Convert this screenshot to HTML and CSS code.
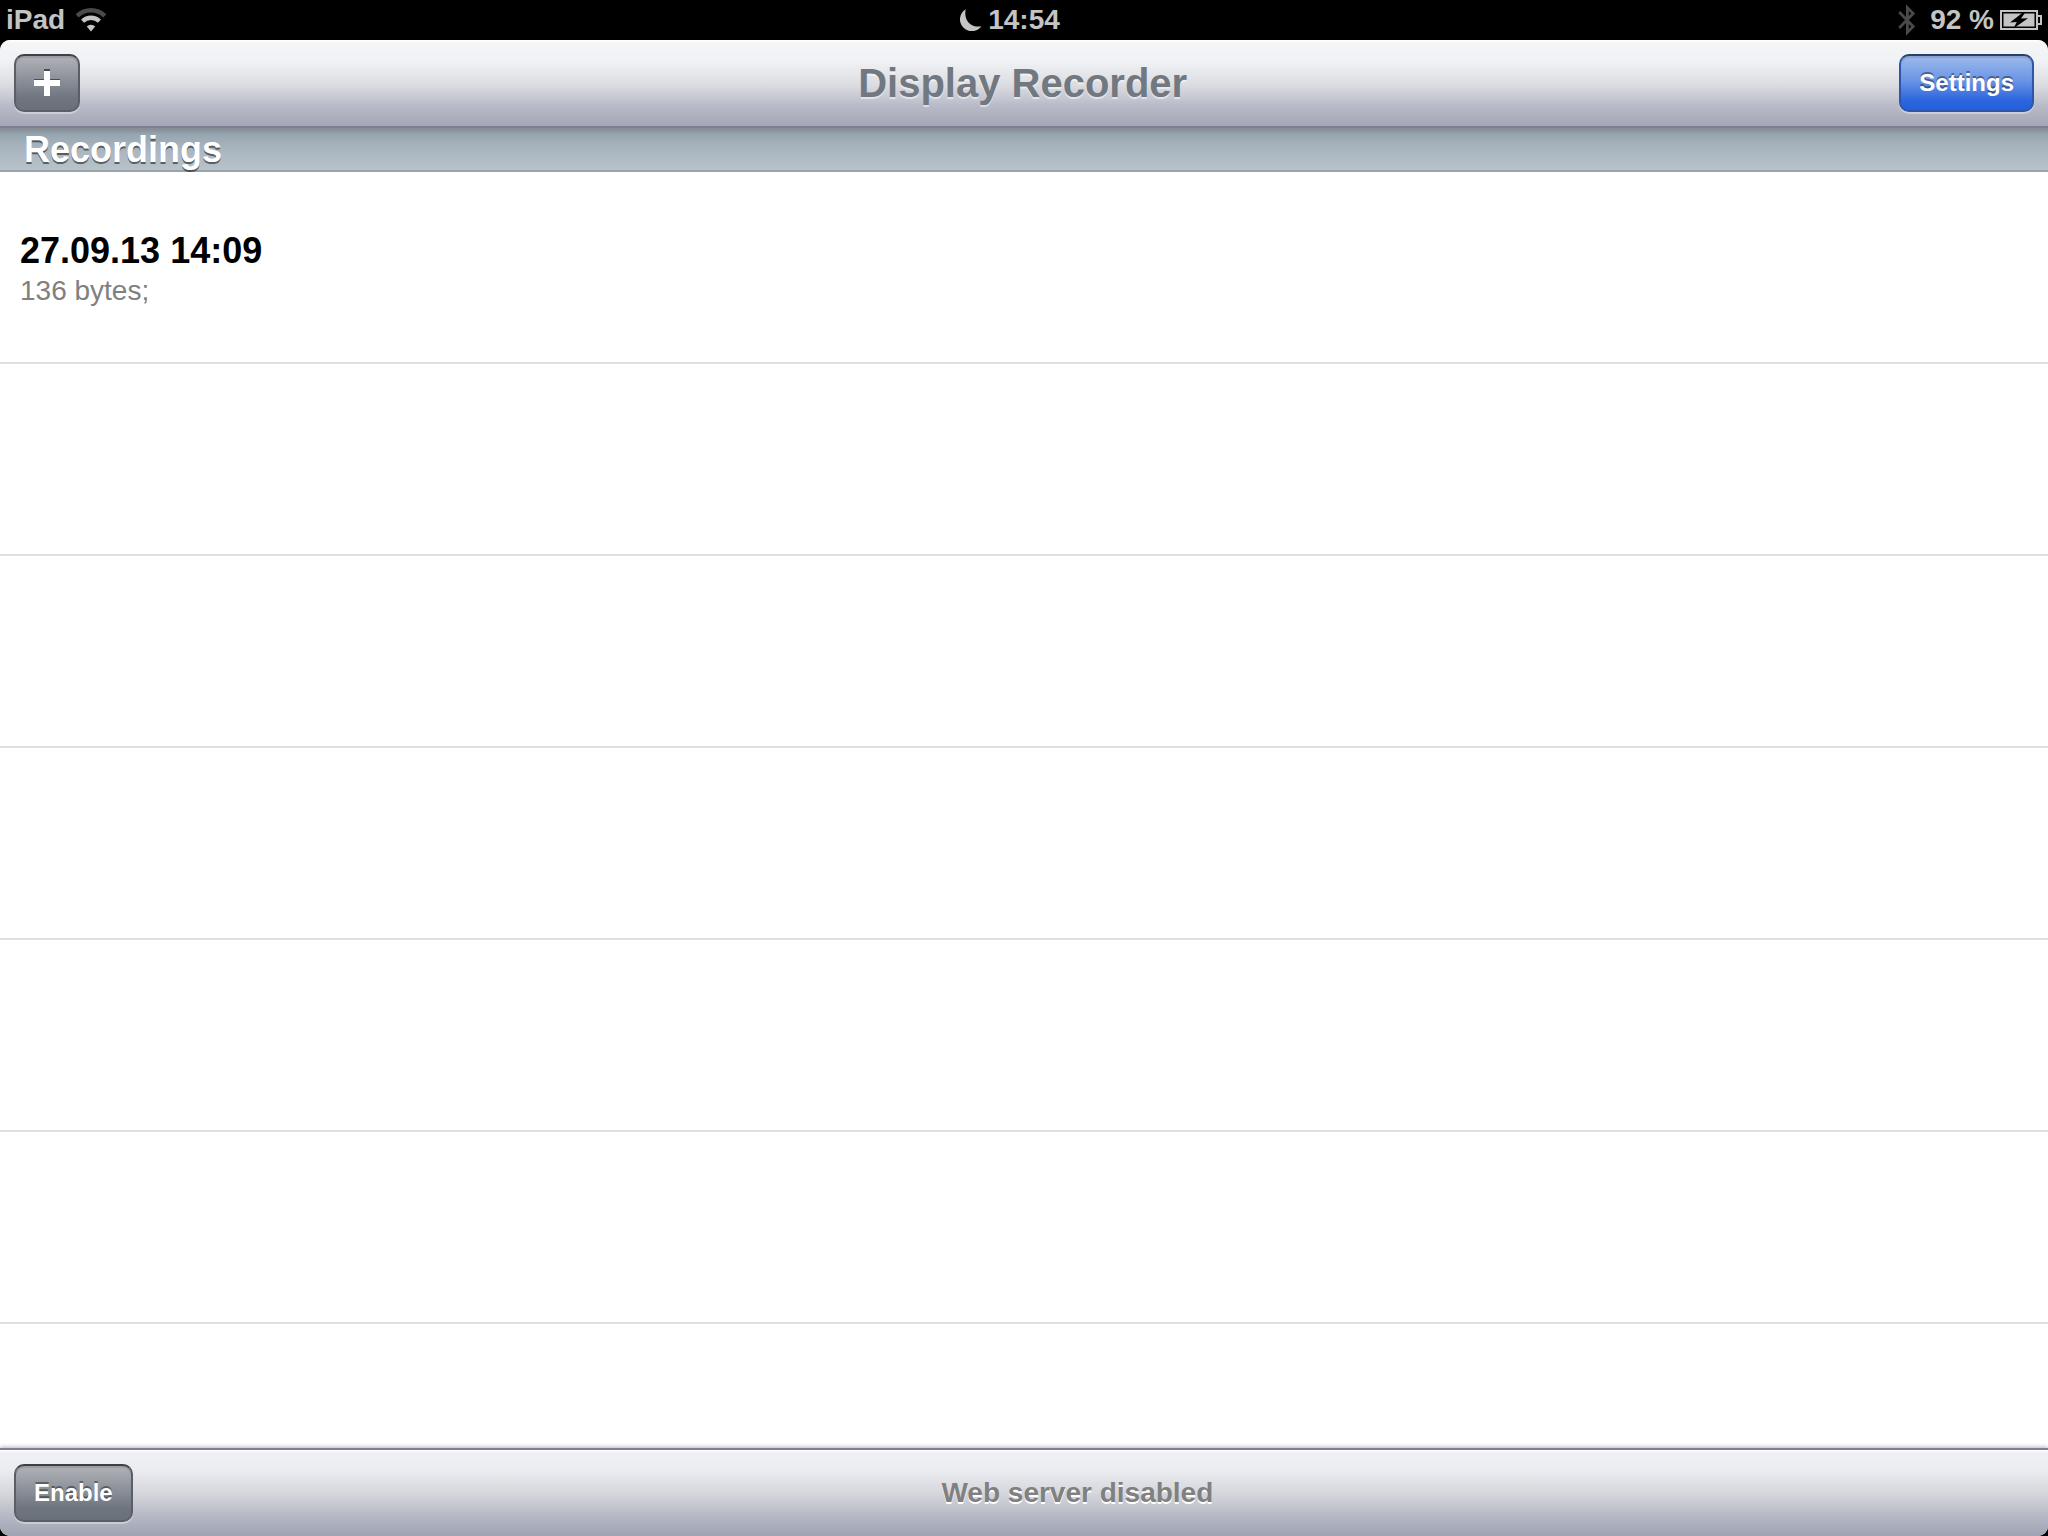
FILE: index.html
```html
<!DOCTYPE html>
<html lang="en">
<head>
  <meta charset="UTF-8">
  <meta name="viewport" content="width=device-width, initial-scale=1.0">
  <title>Display Recorder</title>
  <link rel="stylesheet" href="styles.css">
</head>
<body>
  <div class="status-bar">
    <div class="status-left">
      <span>iPad</span>
      <svg class="wifi" width="32" height="24" viewBox="0 0 32 24" aria-hidden="true">
        <path d="M2.2 7.8 A20 20 0 0 1 29.8 7.8" fill="none" stroke="#4a4a4a" stroke-width="4.4"/>
        <path d="M7.6 13.2 A12 12 0 0 1 24.4 13.2" fill="none" stroke="#c4c4c4" stroke-width="4.4"/>
        <path d="M11.8 18.6 A5.8 5.8 0 0 1 20.2 18.6 L16 23.4 Z" fill="#c4c4c4"/>
      </svg>
      <svg class="moon" width="22" height="22" viewBox="0 0 22 22" aria-hidden="true">
        <path d="M5.8 0.2 A11.8 11.8 0 1 0 21.4 17.2 C15.5 18.4 10 16.4 7.4 12 C5.2 8.2 4.8 4 5.8 0.2 Z" fill="#c4c4c4"/>
      </svg>
    </div>
    <span>14:54</span>
    <div class="status-right">
      <svg class="bluetooth" width="18" height="32" viewBox="0 0 18 32" aria-hidden="true">
        <path d="M1.2 8 L15.2 22.4 L9.4 28.4 V3.6 L15.2 9.6 L1.2 24" fill="none" stroke="#4a4a4a" stroke-width="2.8"/>
      </svg>
      <span>92 %</span>
      <svg class="battery" width="42" height="20" viewBox="0 0 42 20" aria-hidden="true">
        <rect x="1" y="1" width="36" height="18" fill="none" stroke="#c4c4c4" stroke-width="2"/>
        <path d="M38 6 H41 V14 H38" fill="none" stroke="#c4c4c4" stroke-width="2"/>
        <rect x="3" y="3" width="32" height="14" fill="#c4c4c4" stroke="#000" stroke-width="1"/>
        <path d="M23.5 2 L10 12.4 L16.8 12 L13.4 18.4 L28 8.2 L21 8.4 L25.6 2 Z" fill="#000"/>
      </svg>
    </div>
  </div>

  <div class="app">
    <header class="nav-bar">
      <button type="button" class="button" aria-label="Add">
        <svg width="26" height="28" viewBox="0 0 26 28" aria-hidden="true">
          <path d="M10 0 H16 V10 H26 V16 H16 V26 H10 V16 H0 V10 H10 Z" fill="#484d55"/>
          <path d="M10 2 H16 V11 H26 V17 H16 V27 H10 V17 H0 V11 H10 Z" fill="#fff"/>
        </svg>
      </button>
      <h1 class="title">Display Recorder</h1>
      <button type="button" class="button button-done">Settings</button>
    </header>

    <main class="content">
      <h2 class="section-header">Recordings</h2>
      <ul class="recordings">
        <li class="row">
          <div class="row-title">27.09.13 14:09</div>
          <div class="row-detail">136 bytes;</div>
        </li>
        <li class="row"></li>
        <li class="row"></li>
        <li class="row"></li>
        <li class="row"></li>
        <li class="row"></li>
        <li class="row"></li>
      </ul>
    </main>

    <footer class="toolbar">
      <button type="button" class="button">Enable</button>
      <div class="server-status">Web server disabled</div>
    </footer>
  </div>
</body>
</html>
```

FILE: styles.css
```css
* {
  box-sizing: border-box;
}

body {
  margin: 0;
  height: 100vh;
  display: flex;
  flex-direction: column;
  overflow: hidden;
  background: #000;
  font-family: "Liberation Sans", Helvetica, Arial, sans-serif;
}

/* Status bar */
.status-bar {
  display: grid;
  grid-template-columns: 1fr auto 1fr;
  align-items: center;
  height: 40px;
  padding: 0 6px;
  color: #c4c4c4;
  font-size: 28px;
  line-height: 40px;
  font-weight: bold;
}

.status-left,
.status-right {
  display: flex;
  align-items: center;
}

.status-right {
  justify-content: flex-end;
}

.wifi {
  margin-left: 10px;
}

.moon {
  margin-left: auto;
  margin-right: 6px;
}

.bluetooth {
  margin-right: 14px;
}

.battery {
  margin-left: 6px;
}

/* App window */
.app {
  flex: 1;
  min-height: 0;
  display: flex;
  flex-direction: column;
  overflow: hidden;
  background: #fff;
  border-radius: 10px;
}

.nav-bar {
  display: flex;
  align-items: center;
  justify-content: space-between;
  height: 88px;
  padding: 0 14px;
  border-bottom: 2px solid #7f7f93;
  background: linear-gradient(#fff 0, #f4f5f7 3px, #f1f2f5 24%, #dcdde2 52%, #b9bbc9 76%, #a3a6b4 100%);
}

.title {
  margin: 0;
  /* balances the wider button on the right */
  padding-left: 66px;
  color: #717880;
  font-size: 40px;
  line-height: 48px;
  text-shadow: 0 2px 0 rgba(255, 255, 255, 0.5);
}

.button {
  display: flex;
  align-items: center;
  justify-content: center;
  height: 58px;
  padding: 0 18px;
  border: 2px solid #5a5f67;
  border-top-color: #3d4046;
  border-radius: 10px;
  background: linear-gradient(#b0b3b9, #8b9098 45%, #6e757f 78%, #69707a);
  background-clip: padding-box;
  background-color: #5a5f67;
  box-shadow: 0 2px 0 rgba(255, 255, 255, 0.35), inset 0 2px 1px rgba(0, 0, 0, 0.12);
  color: #fff;
  font-family: inherit;
  font-size: 24px;
  line-height: 28px;
  font-weight: bold;
  text-shadow: 0 -2px 0 rgba(0, 0, 0, 0.4);
}

.button-done {
  border-color: #2f55a8;
  border-top-color: #2b3f6b;
  background: linear-gradient(#9dbaec, #6b95e6 45%, #2c66de 82%, #2360dd);
}

/* Recordings list */
.content {
  flex: 1;
  min-height: 0;
  overflow: hidden;
}

.section-header {
  height: 44px;
  margin: 0;
  padding: 0 24px;
  border-bottom: 2px solid #98a4ab;
  background: linear-gradient(#858d96 0, #8b959e 3px, #96a5b0 6px, #a5b1bb 40%, #b0bac4 70%, #b7c2c9 100%);
  color: #fff;
  font-size: 36px;
  line-height: 44px;
  text-shadow: 0 2px 0 rgba(0, 0, 0, 0.5);
}

.recordings {
  margin: 0;
  padding: 0;
  list-style: none;
}

.row {
  display: flex;
  flex-direction: column;
  justify-content: center;
  height: 192px;
  padding: 3px 20px 0;
  border-bottom: 2px solid #e0e0e0;
}

.row-title {
  font-size: 36px;
  line-height: 44px;
  font-weight: bold;
}

.row-detail {
  color: #808080;
  font-size: 28px;
  line-height: 36px;
}

/* Bottom toolbar */
.toolbar {
  display: flex;
  align-items: center;
  height: 88px;
  padding: 0 26px 0 14px;
  border-top: 2px solid #7f7f93;
  background: linear-gradient(#fff 0, #eff0f5 3px, #ecedf1 22%, #d6d7dd 50%, #b4b7c4 78%, #9fa4b2 100%);
  box-shadow: 0 -1px 4px rgba(0, 0, 0, 0.3);
}

.server-status {
  flex: 1;
  text-align: center;
  color: #808080;
  font-size: 28px;
  line-height: 36px;
  font-weight: bold;
  text-shadow: 0 2px 0 #fff;
}
```
